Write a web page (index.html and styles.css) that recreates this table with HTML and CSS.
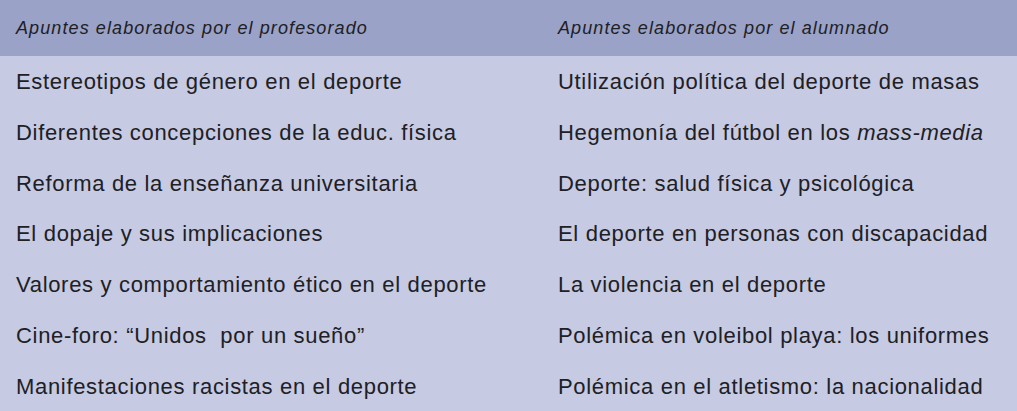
FILE: index.html
```html
<!DOCTYPE html>
<html lang="es">
<head>
<meta charset="utf-8">
<link rel="stylesheet" href="styles.css">
</head>
<body>
<div class="table">
  <div class="cell head"><span>Apuntes elaborados por el profesorado</span></div>
  <div class="cell head"><span>Apuntes elaborados por el alumnado</span></div>
  <div class="cell"><span>Estereotipos de género en el deporte</span></div>
  <div class="cell"><span>Utilización política del deporte de masas</span></div>
  <div class="cell"><span>Diferentes concepciones de la educ. física</span></div>
  <div class="cell"><span>Hegemonía del fútbol en los <em>mass-media</em></span></div>
  <div class="cell"><span>Reforma de la enseñanza universitaria</span></div>
  <div class="cell"><span>Deporte: salud física y psicológica</span></div>
  <div class="cell"><span>El dopaje y sus implicaciones</span></div>
  <div class="cell"><span>El deporte en personas con discapacidad</span></div>
  <div class="cell"><span>Valores y comportamiento ético en el deporte</span></div>
  <div class="cell"><span>La violencia en el deporte</span></div>
  <div class="cell"><span>Cine-foro: “Unidos&nbsp; por un sueño”</span></div>
  <div class="cell"><span>Polémica en voleibol playa: los uniformes</span></div>
  <div class="cell"><span>Manifestaciones racistas en el deporte</span></div>
  <div class="cell"><span>Polémica en el atletismo: la nacionalidad</span></div>
</div>
</body>
</html>
```

FILE: styles.css
```css
html, body {
  margin: 0;
  padding: 0;
}
body {
  width: 1017px;
  height: 411px;
  overflow: hidden;
  background: #c6cae3;
  font-family: "Liberation Sans", Arial, sans-serif;
  color: #202024;
}
.table {
  display: grid;
  grid-template-columns: 542px 1fr;
  grid-template-rows: 56px repeat(7, 1fr);
  height: 411px;
  background: #c6cae3;
}
.cell {
  display: flex;
  align-items: center;
  padding-left: 16px;
  padding-top: 2px;
  font-size: 22px;
  letter-spacing: 0.68px;
  white-space: nowrap;
}
.head {
  background: #9aa2c8;
  font-style: italic;
  font-size: 18px;
  letter-spacing: 1.1px;
  padding-top: 1px;
  padding-bottom: 0;
}
em {
  font-style: italic;
}
```
